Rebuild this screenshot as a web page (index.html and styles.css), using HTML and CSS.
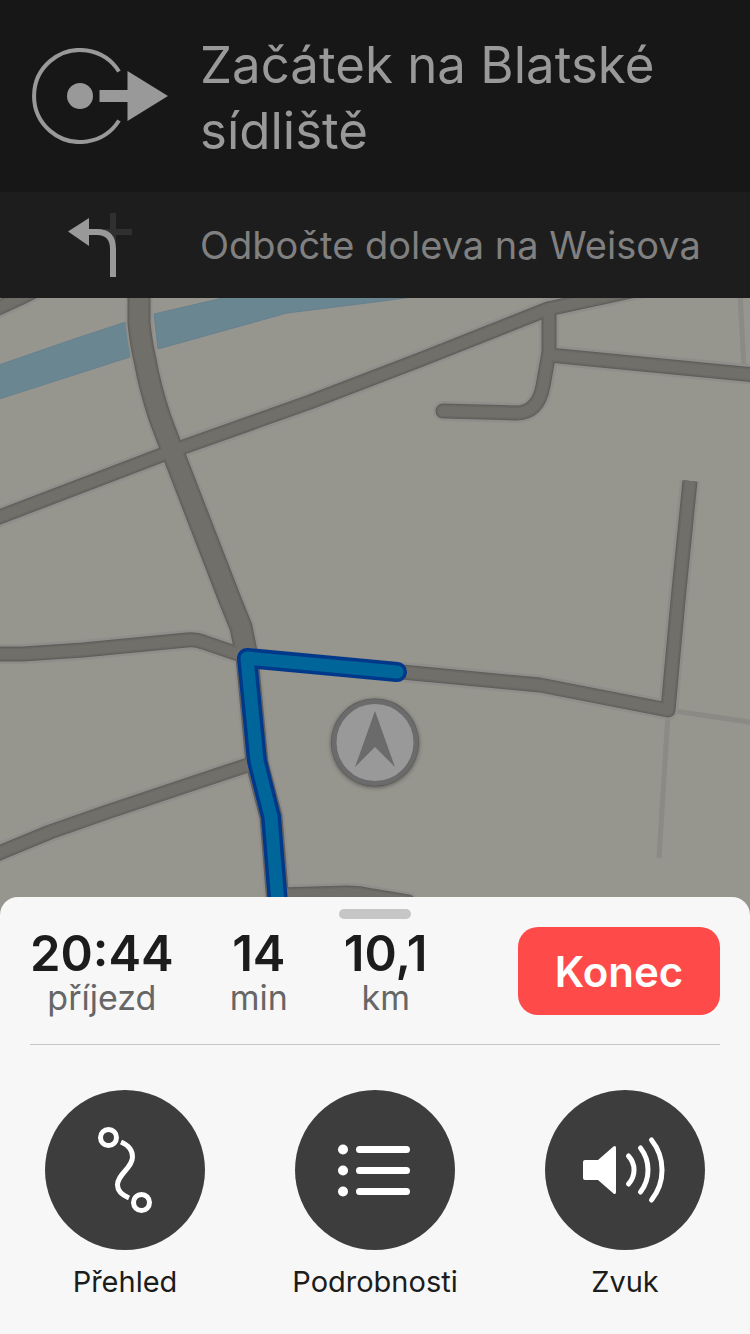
FILE: index.html
```html
<!DOCTYPE html>
<html lang="cs">
<head>
<meta charset="UTF-8">
<meta name="viewport" content="width=device-width, initial-scale=1.0">
<title>Navigace</title>
<link rel="stylesheet" href="styles.css">
</head>
<body>

<header>
  <div class="step step-now">
    <div class="step-icon">
      <svg width="136" height="96" viewBox="0 0 136 96" aria-hidden="true">
        <path d="M87 23.500A46 46 0 1 0 87 72.500" fill="none" stroke="#999" stroke-width="4"/>
        <circle cx="48" cy="48" r="13" fill="#999"/>
        <path d="M67.500 42H95.500V23L136 48L95.500 73V54H67.500Z" fill="#999"/>
      </svg>
    </div>
    <h1>Začátek na Blatské sídliště</h1>
  </div>
  <div class="step step-next">
    <div class="step-icon">
      <svg width="64" height="64" viewBox="0 0 64 64" aria-hidden="true">
        <path d="M45 0V30M36 19H64" fill="none" stroke="#303030" stroke-width="6"/>
        <path d="M20 19H29C40 19 45 25 45 36V64" fill="none" stroke="#999" stroke-width="6"/>
        <path d="M0 18.500L21 5V33Z" fill="#999"/>
      </svg>
    </div>
    <p>Odbočte doleva na Weisova</p>
  </div>
</header>

<main class="map">
  <svg viewBox="0 0 750 619" preserveAspectRatio="xMidYMin slice" role="img" aria-label="Mapa trasy">
    <defs>
      <g id="roads">
        <path d="M-6 12L20 0L36 -8"/>
        <path d="M-6 221L172 153L310 104L422 61L548 11L640 -9"/>
        <path d="M549 11V54L543 88Q538 115 516 115L443 113"/>
        <path d="M549 57L756 77"/>
        <path d="M-6 356H23L83 352L187 342Q196 341 203 344L247 359"/>
        <path d="M-6 557L50 534L110 513L248 467"/>
        <path d="M280 597L347 595Q360 595 372 598L408 604"/>
        <path class="butt" d="M690 183L678 302L668 412L540 387L402 374L247 359"/>
      </g>
      <path id="main-road" d="M139 -10V25Q141 45 145 62Q150 90 160 120L172 152L230 302L241 329L247 359L257 465L271 519L280 630"/>
      <path id="route" d="M397 374L247 360L257 463L271 519L280 630"/>
    </defs>

    <!-- řeka -->
    <g class="water">
      <path d="M-4 68L77 40L126 24L130 59L-4 102Z"/>
      <path d="M154 16L223 0L240 -6H440L405 0L375 4L287 15L158 51Z"/>
    </g>

    <!-- pěšiny -->
    <g class="paths">
      <path d="M740 -4L744 70"/>
      <path d="M668 412L756 425"/>
      <path d="M668 416L659 560"/>
    </g>

    <!-- silnice, od okraje ke středu -->
    <g class="roads">
      <use href="#roads" class="halo"/>
      <use href="#main-road" class="halo wide"/>
      <use href="#roads" class="edge"/>
      <use href="#main-road" class="edge wide"/>
      <use href="#roads" class="soft"/>
      <use href="#main-road" class="soft wide"/>
      <use href="#roads" class="fill"/>
      <use href="#main-road" class="fill wide"/>
    </g>

    <!-- trasa -->
    <use href="#route" class="route-edge"/>
    <use href="#route" class="route-fill"/>

    <!-- poloha -->
    <g class="puck">
      <circle class="puck-rim" cx="375" cy="444.500" r="44"/>
      <circle class="puck-face" cx="375" cy="444.500" r="41"/>
      <path d="M375 413L395 469L375 449L355 469Z" fill="#6b6b6b"/>
    </g>
  </svg>
</main>

<section class="sheet">
  <div class="handle"></div>
  <div class="trip">
    <dl class="stats">
      <div><dd>20:44</dd><dt>příjezd</dt></div>
      <div><dd>14</dd><dt>min</dt></div>
      <div><dd>10,1</dd><dt>km</dt></div>
    </dl>
    <button class="btn-end" type="button">Konec</button>
  </div>

  <div class="actions">
    <button class="action" type="button">
      <svg viewBox="0 0 160 160" aria-hidden="true">
        <circle cx="63.500" cy="47.500" r="8"/>
        <circle cx="96.500" cy="112.500" r="8"/>
        <path d="M76 52C83 55 87.500 60 87.500 67C87.500 78 72.500 84 72.500 95C72.500 101 77 105 84 108"/>
      </svg>
      <span>Přehled</span>
    </button>
    <button class="action" type="button">
      <svg viewBox="0 0 160 160" aria-hidden="true">
        <g fill="#fff" stroke="none">
          <circle cx="48" cy="59.500" r="5"/>
          <circle cx="48" cy="80.500" r="5"/>
          <circle cx="48" cy="101.500" r="5"/>
        </g>
        <path d="M64.500 59.500H111.500M64.500 80.500H111.500M64.500 101.500H111.500" stroke-width="7" stroke-linecap="round"/>
      </svg>
      <span>Podrobnosti</span>
    </button>
    <button class="action" type="button">
      <svg viewBox="0 0 160 160" aria-hidden="true">
        <path d="M40 70H53L68.500 56.500Q71 55 71 58V102Q71 105 68.500 103.500L53 90H40Q38 90 38 88V72Q38 70 40 70Z" fill="#fff" stroke="none"/>
        <path d="M83.500 66A20.500 20.500 0 0 1 83.500 94M95.500 58A36 36 0 0 1 95.500 102M106.500 50A48 48 0 0 1 106.500 110" stroke-linecap="round"/>
      </svg>
      <span>Zvuk</span>
    </button>
  </div>
</section>

</body>
</html>
```
FILE: styles.css
```css
:root {
  --bar:#171717; --bar-next:#1d1d1d; --land:#96958e; --sheet:#f7f7f7; --text:#1c1c1c; --muted:#666; --line:#c6c6c6; --end:#ff4a4a; --disc:#3d3d3d;
}
*{box-sizing:border-box}
body{margin:0;min-height:100vh;display:flex;flex-direction:column;background:var(--sheet);color:var(--text);font-family:Inter,"Liberation Sans",sans-serif}
h1,p,dl,dt,dd{margin:0;font-weight:400}
button{font-family:inherit;border:none;padding:0;cursor:pointer}
svg{display:block}

.step{display:flex;align-items:center;gap:32px;padding:0 32px}
.step-icon{flex:0 0 136px;display:flex;justify-content:center}
.step-now{min-height:192px;background:var(--bar);color:#999}
.step-next{min-height:106px;background:var(--bar-next);color:#808080}
h1{padding-top:4px;font-size:51px;line-height:66px}
.step-next p{font-size:38px;line-height:48px;white-space:nowrap}

.map{flex:1;min-height:300px;position:relative;background:var(--land);overflow:hidden}
.map svg{position:absolute;inset:0;width:100%;height:100%}
.water{fill:#6a8791;stroke:#678090;stroke-width:1}
.paths{fill:none;stroke:#8b8a84;stroke-width:5}
.roads{fill:none;stroke-linecap:round;stroke-linejoin:round}
.butt{stroke-linecap:butt}
.halo{stroke:#8f8e8b;stroke-width:20}
.edge{stroke:#5f5e5b;stroke-width:15}
.soft{stroke:#696863;stroke-width:13}
.fill{stroke:#706f6a;stroke-width:10}
.halo.wide{stroke-width:27}
.edge.wide{stroke-width:23}
.soft.wide{stroke-width:21}
.fill.wide{stroke-width:18}
.route-edge,.route-fill{fill:none;stroke-linecap:round;stroke-linejoin:round}
.route-edge{stroke:#00388a;stroke-width:20}
.route-fill{stroke:#006699;stroke-width:13}
.puck{filter:drop-shadow(0 1px 2px rgba(0,0,0,.4))}
.puck-rim{fill:#555}
.puck-face{fill:#999;stroke:#6b6b6b;stroke-width:5}

.sheet{position:relative;margin-top:-20px;padding-bottom:32px;background:var(--sheet);border-radius:18px 18px 0 0}
.handle{position:absolute;top:12px;left:50%;width:72px;height:10px;margin-left:-36px;border-radius:5px;background:var(--line)}
.trip{display:flex;justify-content:space-between;align-items:center;margin:0 30px;padding:30px 0 29px;border-bottom:1px solid var(--line)}
.stats{display:flex;gap:56px;text-align:center}
.stats div{display:flex;flex-direction:column}
.stats dd{font-size:49px;line-height:54px;font-weight:600}
.stats dt{font-size:34px;line-height:34px;color:var(--muted)}
.btn-end{width:202px;height:88px;border-radius:20px;background:var(--end);color:#fff;font-size:42px;font-weight:600}

.actions{display:grid;grid-template-columns:repeat(3,1fr);padding-top:45px}
.action{display:flex;flex-direction:column;align-items:center;gap:12px;background:none;color:var(--text);font-size:29px;line-height:40px}
.action svg{width:160px;height:160px;border-radius:50%;background:var(--disc);fill:none;stroke:#fff;stroke-width:5}
```
